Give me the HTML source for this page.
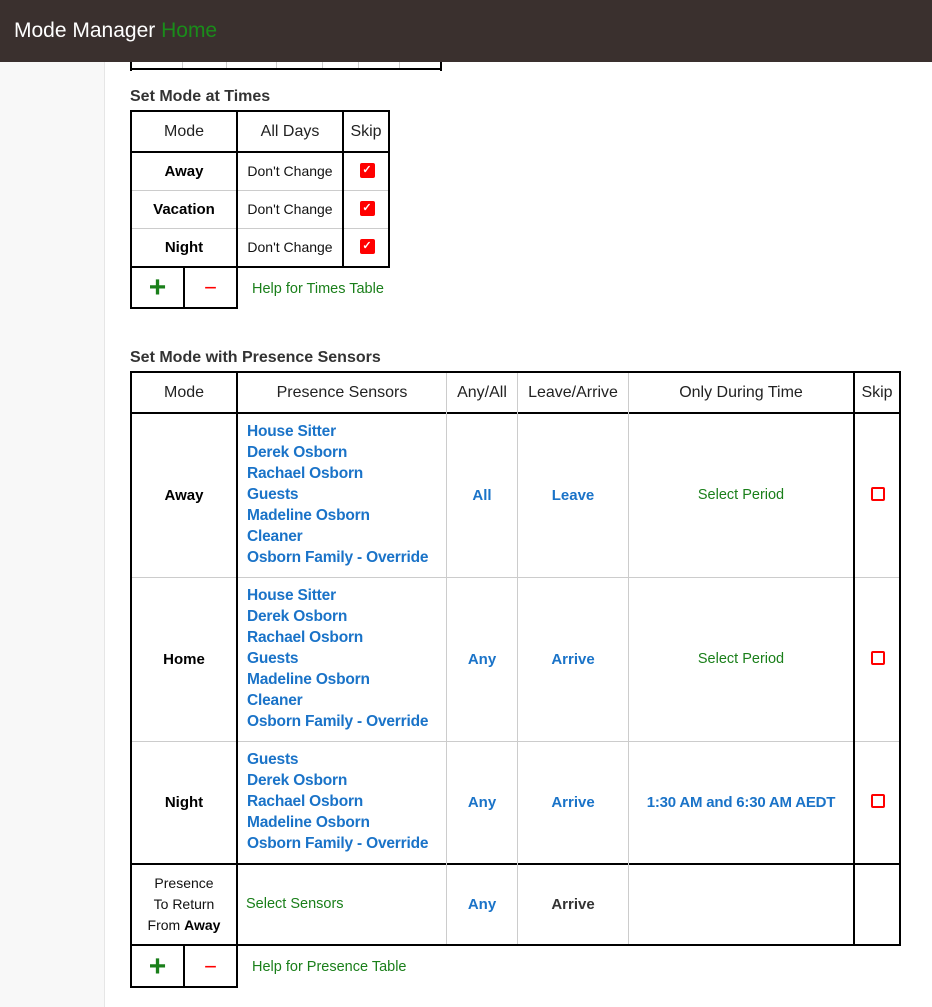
<!DOCTYPE html><html><head><style>
*{margin:0;padding:0;box-sizing:border-box}
body{width:932px;height:1007px;position:relative;background:#fff;font-family:"Liberation Sans",sans-serif;overflow:hidden;color:#222}
.a{position:absolute}
.h{background:#000}
.g{background:#ccc}
.c{position:absolute;display:flex;align-items:center;justify-content:center;text-align:center;font-size:14px;line-height:21px}
.b{font-weight:bold;color:#000}
.bl{color:#1a73c8;font-weight:bold}
.gr{color:#1a7f1a}
.chk{width:15px;height:15px;background:#f00;border-radius:2px;color:#fff;font-size:11px;line-height:15px;text-align:center;font-weight:bold}
.unc{width:14px;height:14px;border:2px solid #f00;border-radius:2px}
.sens{position:absolute;left:247px;font-size:15.5px;line-height:21px;color:#1a73c8;font-weight:bold;letter-spacing:-0.2px}
</style></head><body>
<div class="a" style="left:0;top:62px;width:105px;height:945px;background:#f8f8f8;border-right:1px solid #e6e6e6"></div>
<div class="a" style="left:0;top:0;width:932px;height:62px;background:#3a302e"></div>
<div class="a" style="left:14px;top:18px;font-size:21px;color:#fff;line-height:26px">Mode Manager <span style="color:#1a8c1a">Home</span></div>
<div class="a h" style="left:130px;top:62px;width:2px;height:9px"></div>
<div class="a h" style="left:440px;top:62px;width:2px;height:9px"></div>
<div class="a h" style="left:130px;top:68px;width:312px;height:2px"></div>
<div class="a g" style="left:182px;top:62px;width:1px;height:6px"></div>
<div class="a g" style="left:226px;top:62px;width:1px;height:6px"></div>
<div class="a g" style="left:276px;top:62px;width:1px;height:6px"></div>
<div class="a g" style="left:322px;top:62px;width:1px;height:6px"></div>
<div class="a g" style="left:358px;top:62px;width:1px;height:6px"></div>
<div class="a g" style="left:399px;top:62px;width:1px;height:6px"></div>

<div class="a" style="left:130px;top:88px;font-size:16px;font-weight:bold;color:#333">Set Mode at Times</div>
<div class="a h" style="left:130px;top:110px;width:260px;height:2px"></div>
<div class="a h" style="left:130px;top:151px;width:260px;height:2px"></div>
<div class="a g" style="left:132px;top:190px;width:256px;height:1px"></div>
<div class="a g" style="left:132px;top:228px;width:256px;height:1px"></div>
<div class="a h" style="left:130px;top:266px;width:260px;height:2px"></div>
<div class="a h" style="left:130px;top:307px;width:108px;height:2px"></div>
<div class="a h" style="left:130px;top:110px;width:2px;height:199px"></div>
<div class="a h" style="left:236px;top:110px;width:2px;height:199px"></div>
<div class="a h" style="left:342px;top:110px;width:2px;height:158px"></div>
<div class="a h" style="left:388px;top:110px;width:2px;height:158px"></div>
<div class="a h" style="left:183px;top:266px;width:2px;height:43px"></div>
<div class="c" style="left:132px;top:112px;width:104px;height:39px;font-size:16px">Mode</div>
<div class="c" style="left:238px;top:112px;width:104px;height:39px;font-size:16px">All Days</div>
<div class="c" style="left:344px;top:112px;width:44px;height:39px;font-size:16px">Skip</div>
<div class="c b" style="left:132px;top:153px;width:104px;height:37px;font-size:15px">Away</div>
<div class="c b" style="left:132px;top:191px;width:104px;height:37px;font-size:15px">Vacation</div>
<div class="c b" style="left:132px;top:229px;width:104px;height:37px;font-size:15px">Night</div>
<div class="c" style="left:238px;top:153px;width:104px;height:37px;color:#111">Don't Change</div>
<div class="c" style="left:238px;top:191px;width:104px;height:37px;color:#111">Don't Change</div>
<div class="c" style="left:238px;top:229px;width:104px;height:37px;color:#111">Don't Change</div>
<div class="c" style="left:344px;top:153px;width:46px;height:35px"><div class="chk">✓</div></div>
<div class="c" style="left:344px;top:191px;width:46px;height:35px"><div class="chk">✓</div></div>
<div class="c" style="left:344px;top:229px;width:46px;height:35px"><div class="chk">✓</div></div>
<div class="c" style="left:132px;top:268px;width:51px;height:39px;color:#1a7f1a;font-size:30px;font-weight:bold">+</div>
<div class="c" style="left:185px;top:268px;width:51px;height:39px;color:#f00;font-size:22px">−</div>
<div class="a gr" style="left:252px;top:281px;font-size:14.5px">Help for Times Table</div>

<div class="a" style="left:130px;top:349px;font-size:16px;font-weight:bold;color:#333">Set Mode with Presence Sensors</div>
<div class="a h" style="left:130px;top:371px;width:771px;height:2px"></div>
<div class="a h" style="left:130px;top:412px;width:771px;height:2px"></div>
<div class="a g" style="left:132px;top:577px;width:767px;height:1px"></div>
<div class="a g" style="left:132px;top:741px;width:767px;height:1px"></div>
<div class="a h" style="left:130px;top:863px;width:771px;height:2px"></div>
<div class="a h" style="left:130px;top:944px;width:771px;height:2px"></div>
<div class="a h" style="left:130px;top:986px;width:108px;height:2px"></div>
<div class="a h" style="left:130px;top:371px;width:2px;height:617px"></div>
<div class="a h" style="left:236px;top:371px;width:2px;height:617px"></div>
<div class="a g" style="left:446px;top:373px;width:1px;height:571px"></div>
<div class="a g" style="left:517px;top:373px;width:1px;height:571px"></div>
<div class="a g" style="left:628px;top:373px;width:1px;height:571px"></div>
<div class="a h" style="left:853px;top:371px;width:2px;height:575px"></div>
<div class="a h" style="left:899px;top:371px;width:2px;height:575px"></div>
<div class="a h" style="left:183px;top:944px;width:2px;height:44px"></div>
<div class="c" style="left:132px;top:373px;width:104px;height:39px;font-size:16px">Mode</div>
<div class="c" style="left:238px;top:373px;width:208px;height:39px;font-size:16px">Presence Sensors</div>
<div class="c" style="left:447px;top:373px;width:70px;height:39px;font-size:16px">Any/All</div>
<div class="c" style="left:518px;top:373px;width:110px;height:39px;font-size:16px">Leave/Arrive</div>
<div class="c" style="left:629px;top:373px;width:224px;height:39px;font-size:16px">Only During Time</div>
<div class="c" style="left:855px;top:373px;width:44px;height:39px;font-size:16px">Skip</div>

<div class="c b" style="left:132px;top:414px;width:104px;height:163px;font-size:15px">Away</div>
<div class="sens" style="top:421px">House Sitter<br>Derek Osborn<br>Rachael Osborn<br>Guests<br>Madeline Osborn<br>Cleaner<br>Osborn Family - Override</div>
<div class="c bl" style="left:447px;top:414px;width:70px;height:163px;font-size:15px">All</div>
<div class="c bl" style="left:518px;top:414px;width:110px;height:163px;font-size:15px">Leave</div>
<div class="c gr" style="left:629px;top:414px;width:224px;height:163px;font-size:14.5px">Select Period</div>
<div class="c" style="left:855px;top:414px;width:46px;height:160px"><div class="unc"></div></div>

<div class="c b" style="left:132px;top:578px;width:104px;height:163px;font-size:15px">Home</div>
<div class="sens" style="top:585px">House Sitter<br>Derek Osborn<br>Rachael Osborn<br>Guests<br>Madeline Osborn<br>Cleaner<br>Osborn Family - Override</div>
<div class="c bl" style="left:447px;top:578px;width:70px;height:163px;font-size:15px">Any</div>
<div class="c bl" style="left:518px;top:578px;width:110px;height:163px;font-size:15px">Arrive</div>
<div class="c gr" style="left:629px;top:578px;width:224px;height:163px;font-size:14.5px">Select Period</div>
<div class="c" style="left:855px;top:578px;width:46px;height:160px"><div class="unc"></div></div>

<div class="c b" style="left:132px;top:742px;width:104px;height:121px;font-size:15px">Night</div>
<div class="sens" style="top:749px">Guests<br>Derek Osborn<br>Rachael Osborn<br>Madeline Osborn<br>Osborn Family - Override</div>
<div class="c bl" style="left:447px;top:742px;width:70px;height:121px;font-size:15px">Any</div>
<div class="c bl" style="left:518px;top:742px;width:110px;height:121px;font-size:15px">Arrive</div>
<div class="c bl" style="left:629px;top:742px;width:224px;height:121px;font-size:15px;letter-spacing:-0.2px">1:30 AM and 6:30 AM AEDT</div>
<div class="c" style="left:855px;top:742px;width:46px;height:118px"><div class="unc"></div></div>

<div class="a" style="left:132px;top:873px;width:104px;text-align:center;font-size:14px;line-height:21px;color:#111">Presence<br>To Return<br>From <b style="color:#000">Away</b></div>
<div class="a gr" style="left:246px;top:894px;font-size:14.5px;line-height:21px">Select Sensors</div>
<div class="c bl" style="left:447px;top:865px;width:70px;height:79px;font-size:15px">Any</div>
<div class="c b" style="left:518px;top:865px;width:110px;height:79px;color:#333;font-size:15px">Arrive</div>
<div class="c" style="left:132px;top:946px;width:51px;height:40px;color:#1a7f1a;font-size:30px;font-weight:bold">+</div>
<div class="c" style="left:185px;top:946px;width:51px;height:40px;color:#f00;font-size:22px">−</div>
<div class="a gr" style="left:252px;top:959px;font-size:14.5px">Help for Presence Table</div>
</body></html>
